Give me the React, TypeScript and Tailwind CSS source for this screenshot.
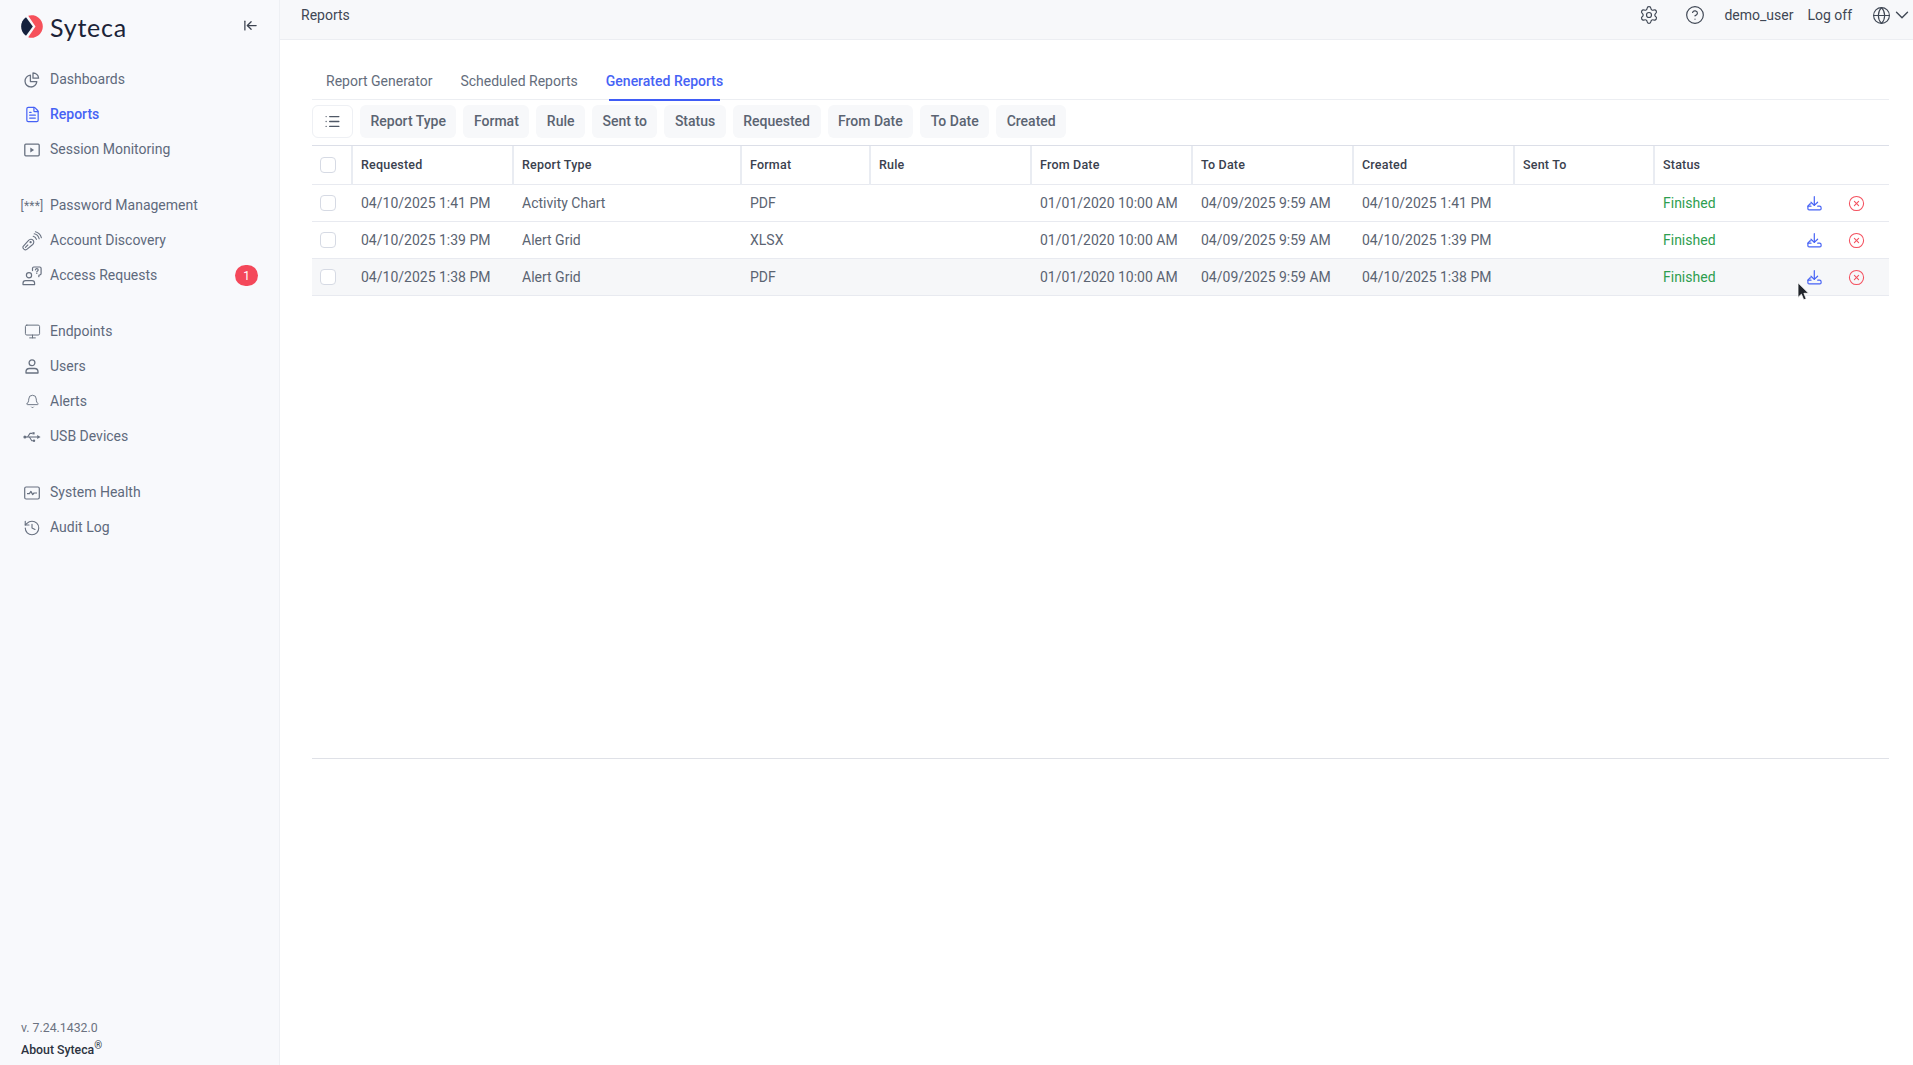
import {
  ArrowLeftToLine,
  Bell,
  ChevronDown,
  CircleHelp,
  CircleX,
  FileText,
  Globe,
  History,
  List,
  Monitor,
  Settings,
} from "lucide-react";
import type { ReactNode } from "react";

function PieIcon() {
  return (
    <svg width="16" height="16" viewBox="0 0 16 16" fill="none" stroke="currentColor" strokeWidth="1.3" strokeLinejoin="round">
      <path d="M6.4 3.2A5.9 5.9 0 1 0 12.8 9.6H6.4z" />
      <path d="M9 1v5.2h5.6A5.6 5.6 0 0 0 9 1z" />
    </svg>
  );
}

function SessionIcon() {
  return (
    <svg width="16" height="14" viewBox="0 0 16 14" fill="none" stroke="currentColor" strokeWidth="1.3">
      <rect x="0.8" y="1.2" width="14.4" height="11.6" rx="1" />
      <path d="M6.3 4.6v4.8l3.8-2.4z" fill="currentColor" stroke="none" />
    </svg>
  );
}

function PasswordIcon() {
  return <span className="text-[12px] leading-none tracking-[0.2px] whitespace-nowrap">[***]</span>;
}

function KeySignalIcon() {
  return (
    <svg width="20" height="20" viewBox="0 0 20 20" fill="none" stroke="currentColor" strokeWidth="1.1" strokeLinecap="round" strokeLinejoin="round">
      <path d="M1 15.6l5.6-6.2c1.2-1.3 3.2-1.5 4.4-.3 1.2 1.2 1 3.2-.3 4.4l-6.2 5.1c-.8.5-1.8.3-2.6-.4-.8-.8-1.2-1.8-.9-2.6z" />
      <path d="M3.4 16.4l2.4-2.4" />
      <circle cx="8.6" cy="11.2" r="0.6" />
      <path d="M11.2 5.2c1.5.4 2.8 1.6 3.2 3.2" />
      <path d="M12.2 2.8c2.5.6 4.4 2.6 5 5" />
      <path d="M13.4 0.8c3 .8 5.2 3 6 6" />
    </svg>
  );
}

function AccessIcon() {
  return (
    <svg width="20" height="20" viewBox="0 0 20 20" fill="none" stroke="currentColor" strokeWidth="1.2" strokeLinecap="round" strokeLinejoin="round">
      <circle cx="7" cy="9.2" r="2.6" />
      <path d="M1 18.6v-1.4c0-1.4 1.2-2.6 2.6-2.6h6.4c1.4 0 2.6 1.2 2.6 2.6v1.4z" />
      <path d="M10.5 4.6V2.4c0-.8.6-1.4 1.4-1.4h5.8c.8 0 1.4.6 1.4 1.4v5.2c0 .8-.6 1.4-1.4 1.4h-.7l-.2 1.6" />
      <path d="M13.4 3.8c.2-.7.8-1.1 1.4-1.1.8 0 1.4.6 1.4 1.2 0 1-1.4 1-1.4 2" />
      <path d="M14.8 7.4v.1" />
    </svg>
  );
}

function UserIcon() {
  return (
    <svg width="14" height="15" viewBox="0 0 14 15" fill="none" stroke="currentColor" strokeWidth="1.3" strokeLinejoin="round">
      <circle cx="7" cy="3.8" r="2.9" />
      <path d="M1 14v-1.2c0-1.9 1.5-3.3 3.3-3.3h5.4c1.8 0 3.3 1.4 3.3 3.3V14z" />
    </svg>
  );
}

function UsbIcon() {
  return (
    <svg width="18" height="12" viewBox="0 0 18 12" fill="none" stroke="currentColor" strokeWidth="1.1" strokeLinejoin="round">
      <circle cx="1.9" cy="6" r="1.5" fill="currentColor" stroke="none" />
      <path d="M2 6h12.5" />
      <path d="M14.2 4l3.4 2-3.4 2z" fill="currentColor" stroke="none" />
      <path d="M4.6 6l2.4-3.6h2.4" />
      <rect x="9.4" y="1.2" width="2.2" height="2.2" fill="currentColor" stroke="none" />
      <path d="M6.4 6l2.4 3.8h1.4" />
      <circle cx="11" cy="9.8" r="1.2" fill="currentColor" stroke="none" />
    </svg>
  );
}

function HealthIcon() {
  return (
    <svg width="16" height="14" viewBox="0 0 16 14" fill="none" stroke="currentColor" strokeWidth="1.2" strokeLinejoin="round">
      <rect x="0.7" y="1" width="14.6" height="12" rx="1.4" />
      <path d="M3 7.6h2.4l1.5-2.2 1.8 3.2 1.3-1.6H13" />
    </svg>
  );
}

function DownloadIcon() {
  return (
    <svg width="15" height="15" viewBox="0 0 15 15" fill="none" stroke="currentColor" strokeWidth="1.2" strokeLinecap="round" strokeLinejoin="round">
      <path d="M7.3 0.7v8.6" />
      <path d="M4 6.2l3.3 3.2 3.3-3.2" />
      <path d="M3.8 7.8H2.9L0.9 10.2v2.5c0 .7.5 1.2 1.2 1.2h10.8c.7 0 1.2-.5 1.2-1.2v-.9c0-.9-.7-1.6-1.6-1.6h-1.8" />
      <path d="M1 10.2h3" />
    </svg>
  );
}

function Cursor() {
  return (
    <svg className="absolute left-[1797px] top-[282px] z-10" width="13" height="19" viewBox="0 0 13 19">
      <path d="M1 0.8v14.6l3.4-3.2 2.3 5.6 2.5-1-2.3-5.5h4.7z" fill="#1f2329" stroke="#ffffff" strokeWidth="0.8" />
    </svg>
  );
}

type NavItem = { label: string; icon: ReactNode; active?: boolean; badge?: string };

const navGroups: NavItem[][] = [
  [
    { label: "Dashboards", icon: <PieIcon /> },
    { label: "Reports", icon: <FileText size={17} strokeWidth={1.7} />, active: true },
    { label: "Session Monitoring", icon: <SessionIcon /> },
  ],
  [
    { label: "Password Management", icon: <PasswordIcon /> },
    { label: "Account Discovery", icon: <KeySignalIcon /> },
    { label: "Access Requests", icon: <AccessIcon />, badge: "1" },
  ],
  [
    { label: "Endpoints", icon: <Monitor size={17} strokeWidth={1.4} /> },
    { label: "Users", icon: <UserIcon /> },
    { label: "Alerts", icon: <Bell size={15} strokeWidth={1.5} /> },
    { label: "USB Devices", icon: <UsbIcon /> },
  ],
  [
    { label: "System Health", icon: <HealthIcon /> },
    { label: "Audit Log", icon: <History size={18} strokeWidth={1.5} /> },
  ],
];

const tabs = ["Report Generator", "Scheduled Reports", "Generated Reports"];
const chips = ["Report Type", "Format", "Rule", "Sent to", "Status", "Requested", "From Date", "To Date", "Created"];

const columns = [
  { label: "Requested", width: "w-[161px]" },
  { label: "Report Type", width: "w-[228px]" },
  { label: "Format", width: "w-[129px]" },
  { label: "Rule", width: "w-[161px]" },
  { label: "From Date", width: "w-[161px]" },
  { label: "To Date", width: "w-[161px]" },
  { label: "Created", width: "w-[161px]" },
  { label: "Sent To", width: "w-[140px]" },
];

const rows = [
  { requested: "04/10/2025 1:41 PM", type: "Activity Chart", format: "PDF", created: "04/10/2025 1:41 PM" },
  { requested: "04/10/2025 1:39 PM", type: "Alert Grid", format: "XLSX", created: "04/10/2025 1:39 PM" },
  { requested: "04/10/2025 1:38 PM", type: "Alert Grid", format: "PDF", created: "04/10/2025 1:38 PM", hover: true },
];

function Checkbox() {
  return <div className="ml-2 h-4 w-4 rounded-[4px] border border-[#d6dae4] bg-white" />;
}

export default function App() {
  return (
    <div className="relative flex h-[1065px] w-[1913px] overflow-hidden bg-white font-['Roboto',sans-serif] text-[14px] text-[#5b6472]">
      <Cursor />

      <aside className="flex w-[280px] shrink-0 flex-col border-r border-[#eef0f4] bg-[#f8f9fc]">
        <div className="flex h-[62px] shrink-0 items-start pl-[21px] pr-[21px] pt-[15px]">
          <svg width="23" height="23" viewBox="0 0 23 23" className="shrink-0">
            <path d="M7.2 0.7A11.3 11.3 0 1 1 7.2 22.3L14.5 11.5z" fill="#f6515b" />
            <path d="M5 2.2L11.8 11.5 5 20.8A11.3 11.3 0 0 1 5 2.2z" fill="#14213d" />
          </svg>
          <span className="ml-[6px] font-['Lato',sans-serif] text-[25px] leading-[24px] font-normal tracking-[0.8px] text-[#1c2438]">Syteca</span>
          <span className="ml-auto mt-[3px] text-[#3c4350]">
            <ArrowLeftToLine size={15} strokeWidth={2} />
          </span>
        </div>

        <nav className="flex flex-col gap-[21px]">
          {navGroups.map((group) => (
            <div key={group[0].label} className="flex flex-col">
              {group.map((item) => (
                <div
                  key={item.label}
                  className={`flex h-[35px] items-center pl-[21px] pr-[21px] ${item.active ? "font-medium text-[#4662f5]" : "text-[#5f6a7c]"}`}
                >
                  <span className={`flex w-[22px] justify-center ${item.active ? "text-[#4662f5]" : "text-[#687180]"}`}>{item.icon}</span>
                  <span className="ml-[7px]">{item.label}</span>
                  {item.badge && (
                    <span className="ml-auto flex h-[21px] w-[23px] items-center justify-center rounded-full bg-[#f4485a] text-[12px] text-white">
                      {item.badge}
                    </span>
                  )}
                </div>
              ))}
            </div>
          ))}
        </nav>

        <div className="mt-auto pb-[4px] pl-[21px]">
          <div className="text-[12.3px] leading-[22px] text-[#6b7280]">v. 7.24.1432.0</div>
          <div className="text-[12.3px] leading-[22px] font-medium text-[#2c3340]">
            About Syteca<sup className="text-[10px] font-normal">®</sup>
          </div>
        </div>
      </aside>

      <main className="flex min-w-0 flex-1 flex-col">
        <header className="flex h-10 shrink-0 items-start border-b border-[#eceef2] bg-[#f7f8fa] pl-[21px] pt-[5px] text-[#3f4754]">
          <span className="pt-px leading-[18px]">Reports</span>
          <div className="ml-auto flex items-center">
            <Settings size={20} strokeWidth={1.4} />
            <CircleHelp size={20} strokeWidth={1.4} className="ml-[26px]" />
            <span className="ml-[19px] leading-[18px]">demo_user</span>
            <span className="ml-[14px] leading-[18px]">Log off</span>
            <Globe size={19} strokeWidth={1.4} className="ml-[20px]" />
            <ChevronDown size={22} strokeWidth={1.5} className="-my-px" />
          </div>
        </header>

        <div className="flex flex-1 flex-col pl-[32px] pr-[24px] pt-[20px]">
          <div className="flex h-[40px] shrink-0 border-b border-[#eceef2]">
            {tabs.map((tab) => {
              const active = tab === "Generated Reports";
              return (
                <div key={tab} className="flex h-[40px] flex-col px-[14px]">
                  <span className={`pt-[12px] leading-[18px] ${active ? "font-medium text-[#4662f5]" : "text-[#646d7c]"}`}>{tab}</span>
                  <div className={`mx-[3px] mt-auto mb-[-1px] h-[2px] ${active ? "bg-[#3f5cf6]" : ""}`} />
                </div>
              );
            })}
          </div>

          <div className="mt-[5px] flex h-[33px] shrink-0 gap-[7px]">
            <div className="flex w-[41px] items-center justify-center rounded-[6px] border border-[#eef0f4] text-[#4f5866]">
              <List size={17} strokeWidth={1.8} />
            </div>
            {chips.map((chip) => (
              <div key={chip} className="flex items-center rounded-[6px] bg-[#f7f8fa] px-[10.5px] font-medium text-[#5b6472]">
                {chip}
              </div>
            ))}
          </div>

          <div className="mt-[7px] h-[614px] shrink-0 border-t border-b border-t-[#dcdfe8] border-b-[#dfe1e7]">
            <table className="w-full table-fixed border-collapse">
              <colgroup>
                <col className="w-[40px]" />
                {columns.map((c) => (
                  <col key={c.label} className={c.width} />
                ))}
                <col />
              </colgroup>
              <thead>
                <tr className="h-[38px] border-b border-[#e8eaf0] text-[12.5px] tracking-[0.2px] text-[#3a414e]">
                  <th className="border-r-2 border-[#e9ecf2] p-0">
                    <Checkbox />
                  </th>
                  {columns.map((c) => (
                    <th key={c.label} className="border-r-2 border-[#e9ecf2] pl-[8px] pt-[2px] text-left font-medium">
                      {c.label}
                    </th>
                  ))}
                  <th className="pl-[8px] pt-[2px] text-left font-medium">Status</th>
                </tr>
              </thead>
              <tbody>
                {rows.map((row) => (
                  <tr key={row.requested} className={`h-[37px] border-b border-[#e8eaf0] ${row.hover ? "bg-[#f6f7f9]" : ""}`}>
                    <td className="p-0">
                      <Checkbox />
                    </td>
                    <td className="pl-[9px] pt-[2px]">{row.requested}</td>
                    <td className="pl-[9px] pt-[2px]">{row.type}</td>
                    <td className="pl-[9px] pt-[2px]">{row.format}</td>
                    <td className="pl-[9px]" />
                    <td className="pl-[9px] pt-[2px]">01/01/2020 10:00 AM</td>
                    <td className="pl-[9px] pt-[2px]">04/09/2025 9:59 AM</td>
                    <td className="pl-[9px] pt-[2px]">{row.created}</td>
                    <td className="pl-[9px]" />
                    <td className="pl-[9px] pr-[24px] pt-[2px]">
                      <div className="flex items-center">
                        <span className="text-[#2e9e4f]">Finished</span>
                        <span className="ml-auto text-[#4662f5]">
                          <DownloadIcon />
                        </span>
                        <CircleX size={17} strokeWidth={1.5} className="ml-[26px] text-[#f4515f]" />
                      </div>
                    </td>
                  </tr>
                ))}
              </tbody>
            </table>
          </div>
        </div>
      </main>
    </div>
  );
}
